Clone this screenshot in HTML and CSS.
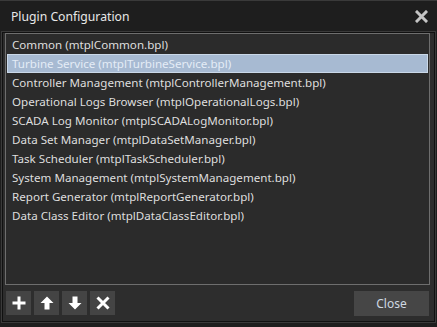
FILE: index.html
```html
<!DOCTYPE html>
<html lang="en">
<head>
    <meta charset="UTF-8">
    <title>Plugin Configuration</title>
    <link rel="stylesheet" href="styles.css">
</head>
<body>
    <div class="dialog">
        <div class="title-bar">
            <span class="title">Plugin Configuration</span>
            <svg class="title-close" width="13" height="13" viewBox="0 0 13 13">
                <path d="M2 2 L11 11 M11 2 L2 11" stroke="#c4c4c4" stroke-width="3" stroke-linecap="square"/>
            </svg>
        </div>
        <div class="panel">
            <ul class="plugin-list">
                <li>Common (mtplCommon.bpl)</li>
                <li class="selected">Turbine Service (mtplTurbineService.bpl)</li>
                <li>Controller Management (mtplControllerManagement.bpl)</li>
                <li>Operational Logs Browser (mtplOperationalLogs.bpl)</li>
                <li>SCADA Log Monitor (mtplSCADALogMonitor.bpl)</li>
                <li>Data Set Manager (mtplDataSetManager.bpl)</li>
                <li>Task Scheduler (mtplTaskScheduler.bpl)</li>
                <li>System Management (mtplSystemManagement.bpl)</li>
                <li>Report Generator (mtplReportGenerator.bpl)</li>
                <li>Data Class Editor (mtplDataClassEditor.bpl)</li>
            </ul>
            <div class="toolbar">
                <div class="tool-buttons">
                    <button class="tool" title="Add">
                        <svg width="16" height="16" viewBox="0 0 16 16"><path d="M8 1.5 V14.5 M1.5 8 H14.5" stroke="#fff" stroke-width="3"/></svg>
                    </button>
                    <button class="tool" title="Move up">
                        <svg width="16" height="16" viewBox="0 0 16 16"><path d="M8 1.5 L14.5 8 H10.5 V14.5 H5.5 V8 H1.5 Z" fill="#fff"/></svg>
                    </button>
                    <button class="tool" title="Move down">
                        <svg width="16" height="16" viewBox="0 0 16 16"><path d="M8 14.5 L14.5 8 H10.5 V1.5 H5.5 V8 H1.5 Z" fill="#fff"/></svg>
                    </button>
                    <button class="tool" title="Remove">
                        <svg width="16" height="16" viewBox="0 0 16 16"><path d="M2.5 2.5 L13.5 13.5 M13.5 2.5 L2.5 13.5" stroke="#fff" stroke-width="3"/></svg>
                    </button>
                </div>
                <button class="close-button">Close</button>
            </div>
        </div>
    </div>
</body>
</html>
```

FILE: styles.css
```css
html, body {
    margin: 0;
    padding: 0;
    height: 100%;
    background-color: #1b1b1b;
}
body {
    font-family: "Noto Sans", "Open Sans", sans-serif;
    font-size: 11.6px;
}
.dialog {
    width: 437px;
    height: 327px;
    box-sizing: border-box;
    border-top: 1px solid #3a3a3a;
    background-color: #1e1e1e;
    display: flex;
    flex-direction: column;
}
.title-bar {
    height: 31px;
    display: flex;
    align-items: center;
    justify-content: space-between;
    padding: 0 9px 0 11px;
}
.title {
    color: #e8e8e8;
    font-size: 12.2px;
    margin-top: -1px;
}
.title-close {
    display: block;
    margin-top: -1px;
}
.panel {
    margin: 0 2px 5px 2px;
    flex: 1;
    background-color: #2d2d2d;
    border: 1px solid #111;
    outline: 1px solid #3a3a3a;
    padding: 0 4px 0 2px;
    display: flex;
    flex-direction: column;
}
.plugin-list {
    list-style: none;
    margin: 0;
    padding: 1px;
    height: 248px;
    border: 1px solid #6e6e6e;
    background-color: #2b2b2b;
}
.plugin-list li {
    height: 19px;
    line-height: 19px;
    padding-left: 5px;
    color: #dedede;
    white-space: nowrap;
    box-sizing: border-box;
}
.plugin-list li.selected {
    background-color: #a7bad2;
    border: 1px solid #cad8e8;
    line-height: 17px;
    padding-left: 4px;
    color: #e4ecf6;
}
.toolbar {
    display: flex;
    justify-content: space-between;
    align-items: flex-start;
    margin-top: 6px;
    padding-left: 1px;
}
.tool-buttons {
    display: flex;
    gap: 3px;
}
.tool {
    width: 25px;
    height: 24px;
    padding: 0;
    border: none;
    background-color: #444;
    display: flex;
    align-items: center;
    justify-content: center;
    cursor: pointer;
}
.tool svg {
    display: block;
}
.close-button {
    width: 75px;
    height: 25px;
    border: none;
    background-color: #464646;
    color: #cfd8e2;
    font-family: "Noto Sans", "Open Sans", sans-serif;
    font-size: 12px;
    cursor: pointer;
    margin-right: 1px;
}
```
